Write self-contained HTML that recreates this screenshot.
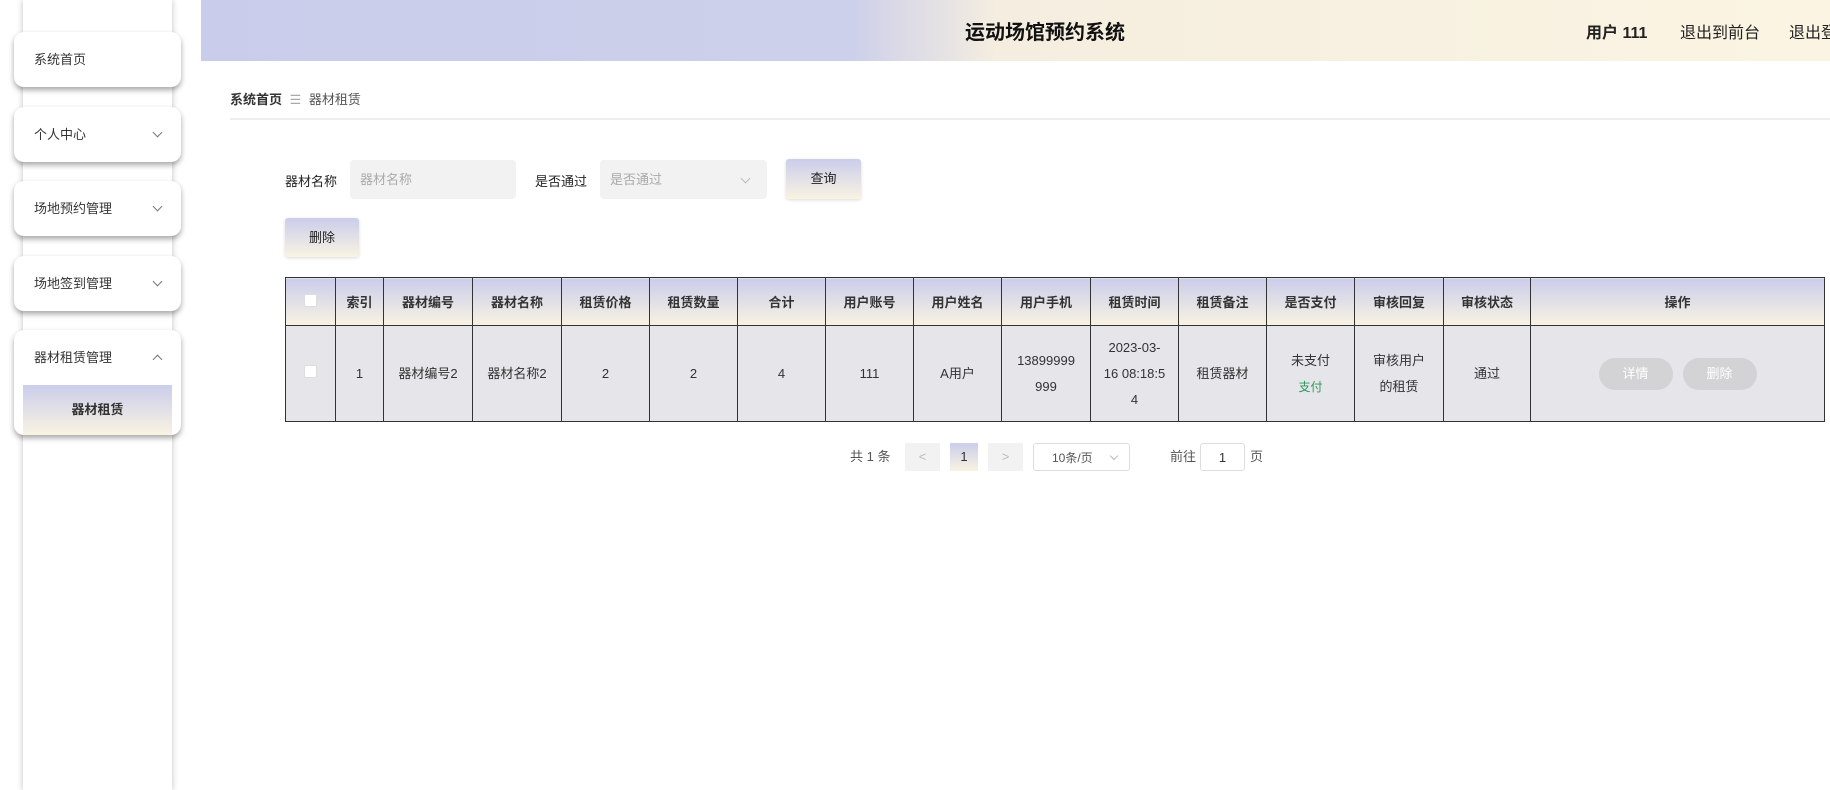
<!DOCTYPE html>
<html><head><meta charset="utf-8"><style>
*{box-sizing:border-box;margin:0;padding:0}
body{width:1830px;height:790px;background:#fff;font-family:"Liberation Sans","Noto Sans CJK SC",sans-serif;color:#333;position:relative;overflow:hidden;font-size:13px}
.side{position:absolute;left:23px;top:0;width:149px;height:790px;background:#fff;box-shadow:0 0 6px rgba(0,0,0,.25)}
.card{position:absolute;left:14px;width:167px;background:#fff;border-radius:10px;box-shadow:0 3px 6px rgba(0,0,0,.35);font-size:13px;color:#333}
.card .t{position:absolute;left:20px;top:0;height:55px;line-height:55px}
.card .a{position:absolute;right:20px;top:22px;width:7px;height:7px;border-right:1px solid #777;border-bottom:1px solid #777;transform:rotate(45deg)}
.card .u{position:absolute;right:20px;top:26px;width:7px;height:7px;border-left:1px solid #777;border-top:1px solid #777;transform:rotate(45deg)}
.sub{position:absolute;left:9px;width:149px;top:55px;height:50px;background:linear-gradient(#cbcdeb,#f9f3e2);line-height:50px;text-align:center;font-weight:bold}
.hdr{position:absolute;left:201px;top:0;width:1629px;height:61px;background:linear-gradient(90deg,#c9cdeb 0%,#cdd0ea 40%,#f5eee0 49%,#fbf4e2 100%)}
.hdr .ti{position:absolute;left:764px;top:16px;font-size:20px;font-weight:bold;color:#111}
.hdr .r{position:absolute;top:19px;font-size:16px;color:#222}
.bc{position:absolute;left:230px;top:89px;font-size:13px}
.line{position:absolute;left:230px;right:0;top:118px;height:2px;background:#eee}
.lbl{position:absolute;top:171px;font-size:13px;color:#222}
.inp{position:absolute;top:160px;height:39px;background:#f2f2f3;border-radius:4px;color:#aaa;padding-left:10px;line-height:39px;font-size:13px}
.btn{position:absolute;background:linear-gradient(#cbcdeb,#f9f3e2);border-radius:3px;text-align:center;font-size:13px;color:#222;box-shadow:0 1px 3px rgba(0,0,0,.15)}
table{position:absolute;left:285px;top:277px;width:1540px;border-collapse:collapse;border:1.5px solid #333}
td,th{border:1px solid #333;text-align:center;font-size:13px;color:#333}
th{height:48px;background:linear-gradient(#cbcdeb,#f9f3e2);font-weight:bold}
td{height:96px;background:#e5e5ea;line-height:26px}
.cb{display:inline-block;width:13px;height:13px;background:#fff;border:1px solid #ddd;border-radius:2px}
.pb{display:inline-block;width:74px;height:32px;line-height:32px;border-radius:16px;background:#d3d3d5;color:#fff;margin:0 5px}
.pg{position:absolute;top:443px;height:28px;line-height:28px;font-size:13px;color:#555}
</style></head><body>
<div class="side"></div>
<div class="card" style="top:32px;height:55px"><span class="t">系统首页</span></div>
<div class="card" style="top:107px;height:55px"><span class="t">个人中心</span><span class="a"></span></div>
<div class="card" style="top:181px;height:55px"><span class="t">场地预约管理</span><span class="a"></span></div>
<div class="card" style="top:256px;height:55px"><span class="t">场地签到管理</span><span class="a"></span></div>
<div class="card" style="top:330px;height:105px"><span class="t">器材租赁管理</span><span class="u"></span><div class="sub">器材租赁</div></div>
<div class="hdr"><div class="ti">运动场馆预约系统</div>
<div class="r" style="left:1385px;font-weight:bold">用户 111</div>
<div class="r" style="left:1479px">退出到前台</div>
<div class="r" style="left:1588px;white-space:nowrap">退出登录</div></div>
<div class="bc"><b>系统首页</b> <span style="color:#aaa;margin:0 4px">☰</span> <span style="color:#555">器材租赁</span></div>
<div class="line"></div>
<div class="lbl" style="left:285px">器材名称</div>
<div class="inp" style="left:350px;width:166px">器材名称</div>
<div class="lbl" style="left:535px">是否通过</div>
<div class="inp" style="left:600px;width:167px">是否通过<span style="position:absolute;right:18px;top:15px;width:7px;height:7px;border-right:1px solid #bbb;border-bottom:1px solid #bbb;transform:rotate(45deg)"></span></div>
<div class="btn" style="left:786px;top:159px;width:75px;height:40px;line-height:40px">查询</div>
<div class="btn" style="left:285px;top:218px;width:74px;height:39px;line-height:39px">删除</div>
<table><tr>
<th style="width:50px"><span class="cb"></span></th><th style="width:48px">索引</th><th style="width:89px">器材编号</th><th style="width:89px">器材名称</th><th style="width:88px">租赁价格</th><th style="width:88px">租赁数量</th><th style="width:88px">合计</th><th style="width:88px">用户账号</th><th style="width:88px">用户姓名</th><th style="width:89px">用户手机</th><th style="width:88px">租赁时间</th><th style="width:88px">租赁备注</th><th style="width:88px">是否支付</th><th style="width:89px">审核回复</th><th style="width:87px">审核状态</th><th>操作</th></tr>
<tr><td><span class="cb"></span></td><td>1</td><td>器材编号2</td><td>器材名称2</td><td>2</td><td>2</td><td>4</td><td>111</td><td>A用户</td><td>13899999<br>999</td><td>2023-03-<br>16 08:18:5<br>4</td><td>租赁器材</td><td>未支付<br><span style="color:#2a9a5a;font-size:12px">支付</span></td><td>审核用户<br>的租赁</td><td>通过</td><td><span class="pb">详情</span><span class="pb">删除</span></td></tr></table>
<div class="pg" style="left:850px">共 1 条</div>
<div class="pg" style="left:905px;width:35px;background:#f2f2f3;text-align:center;color:#bbb">&lt;</div>
<div class="pg" style="left:950px;width:28px;background:linear-gradient(#cbcdeb,#f9f3e2);text-align:center;color:#333">1</div>
<div class="pg" style="left:988px;width:35px;background:#f2f2f3;text-align:center;color:#bbb">&gt;</div>
<div class="pg" style="left:1033px;width:97px;border:1px solid #ddd;border-radius:3px;padding-left:18px;font-size:12px">10条/页<span style="position:absolute;right:12px;top:9px;width:6px;height:6px;border-right:1px solid #bbb;border-bottom:1px solid #bbb;transform:rotate(45deg)"></span></div>
<div class="pg" style="left:1170px">前往</div>
<div class="pg" style="left:1200px;width:45px;border:1px solid #ddd;border-radius:3px;text-align:center;color:#333">1</div>
<div class="pg" style="left:1250px">页</div>
</body></html>
